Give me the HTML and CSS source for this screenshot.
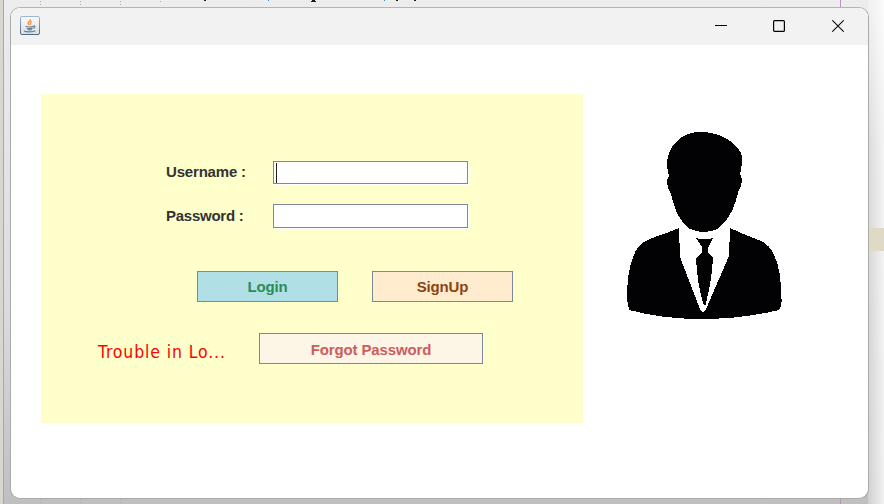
FILE: index.html
```html
<!DOCTYPE html>
<html lang="en">
<head>
<meta charset="utf-8">
<title>Login</title>
<link rel="stylesheet" href="styles.css">
</head>
<body>
<svg class="editor" width="884" height="504" aria-hidden="true">
  <defs>
    <linearGradient id="shade"><stop stop-color="#d0d0d0"/><stop offset="1" stop-color="#f2f2f2"/></linearGradient>
    <linearGradient id="fade" x2="0" y2="1"><stop stop-color="#fff" stop-opacity=".7"/><stop offset=".3" stop-color="#fff" stop-opacity=".2"/><stop offset="1" stop-color="#fff" stop-opacity="0"/></linearGradient>
  </defs>
  <rect x="868" width="16" height="504" fill="url(#shade)"/>
  <rect x="868" width="16" height="504" fill="url(#fade)"/>
  <rect width="3" height="504" fill="#d9d7cd"/>
  <rect x="3" width="1" height="504" fill="#aaa9a5"/>
  <rect x="868" y="228" width="16" height="23" fill="#dfdac5"/>
  <path d="M40.5 1V504M80.5 1V504M120.5 1V504" stroke="#aaa" stroke-dasharray="1 2"/>
  <path d="M160.5 1v1" stroke="#aaa"/>
  <path d="M840.5 0V504" stroke="#bd91bd"/>
  <path d="M204 .5h2M312 .5h3M396 .5h2M414 .5h2M311 1.5h5" stroke="#28190f"/>
  <path d="M268 .5h1M384 .5h1" stroke="#398bc0"/>
</svg>
<div class="window">
  <header class="titlebar">
    <svg class="java" width="20" height="19" viewBox="0 0 20 19">
      <defs>
        <linearGradient id="edge" x2="0" y2="1"><stop stop-color="#9db7d1"/><stop offset="1" stop-color="#496b83"/></linearGradient>
        <linearGradient id="face" x2="0" y2="1"><stop stop-color="#fafafa"/><stop offset="1" stop-color="#dedede"/></linearGradient>
      </defs>
      <rect x=".5" y=".5" width="19" height="18" rx="1.5" fill="url(#face)" stroke="url(#edge)"/>
      <path d="M10.5 3.3c.8 1.8-3.3 2.6-2.3 4.3.3.5.9.8 1.2 1.3M11.8 5.5c-2.4 1.3-1.1 2-1.3 3.3" fill="none" stroke="#ef9145" stroke-width="1.4"/>
      <path d="M5.5 10.3c2 .8 5.5.8 8 0M6.7 12.2c2 .6 3.8.6 6 0M7.5 13.5c1.5.5 3 .5 4.5 0M13.5 10c2-.5 1.6 1.7-.3 2.2M4 15c2 1.2 9 1.2 11.5-.2" fill="none" stroke="#648199" stroke-width="1.2"/>
    </svg>
    <div class="controls">
      <svg width="12" height="14" viewBox="0 0 12 14"><path d="M0 6.5h12" stroke="#000"/></svg>
      <svg width="12" height="14" viewBox="0 0 12 14"><rect x=".6" y="1.6" width="10.8" height="10.8" rx="1" fill="none" stroke="#000" stroke-width="1.2"/></svg>
      <svg width="12" height="14" viewBox="0 0 12 14"><path d="M.3 1.3 11.7 12.7M11.7 1.3.3 12.7" stroke="#000" stroke-width="1.2"/></svg>
    </div>
  </header>
  <main class="content">
    <form class="panel">
      <div class="field"><label for="user">Username :</label><div class="entry"><input id="user" type="text"><span class="caret"></span></div></div>
      <div class="field second"><label for="pass">Password :</label><div class="entry tall"><input id="pass" type="password"></div></div>
      <div class="actions">
        <button type="button" class="login">Login</button>
        <button type="button" class="signup">SignUp</button>
      </div>
      <div class="help">
        <span class="trouble">Trouble in Lo...</span>
        <button type="button" class="forgot">Forgot Password</button>
      </div>
    </form>
    <svg class="avatar" width="190" height="210" viewBox="610 120 190 210" shape-rendering="crispEdges">
      <path fill="#020103" d="M699 131c-8 0-16 3-22 9-6 5-10 14-10 23 0 5 1 8 2 12-3 3-2 11 1 16 2 3 2 8 4 13 3 11 9 19 16 24 9 4 19 4 27 0 8-6 15-15 18-26 2-5 2-8 4-13 3-6 4-10 1-16 2-6 2-13 2-18-1-5-5-9-9-13-8-6-15-9-22-10-4-1-8-1-12-1Z"/>
      <path fill="#020103" d="M679 227c-11 5-23 8-31 12-8 3-12 9-15 17-4 11-6 23-6 42l2 11c23 6 46 9 72 9 28 0 53-3 78-9 3-4 3-9 2-16 0-16-2-29-7-39-3-7-7-11-13-14-10-4-21-8-31-13l-1 28-23 53q-3 6-6 0l-20-52Z"/>
      <path fill="#020103" d="M696 237q8 3 17 0l-5 10q-1 3 0 5l5 5q-1 21-7 45-1 5-3 0-6-21-7-45l6-6q1-3 0-5Z"/>
    </svg>
  </main>
</div>
</body>
</html>
```
FILE: styles.css
```css
* { box-sizing: border-box; }
body {
  width: 884px;
  height: 504px;
  margin: 0;
  padding: 7px 0 0 10px;
  overflow: hidden;
  background: linear-gradient(#ededed, #dcdcdc 60%, #bfbfbf);
  font-family: "Liberation Sans", Arial, sans-serif;
}
.editor {
  position: absolute;
  inset: 0;
}
.window {
  position: relative;
  width: 859px;
  height: 492px;
  border: 1px solid #aaa;
  border-top-color: #b4b4b4;
  border-radius: 10px;
  overflow: hidden;
  background: #fff;
}
.titlebar {
  display: flex;
  justify-content: space-between;
  height: 37px;
  padding: 8px 24px 0 9px;
  background: #f2f2f2;
}
.controls {
  display: flex;
  gap: 46px;
  padding-top: 3px;
}
.controls svg { margin-right: 0.5px; }
.content {
  display: flex;
  padding: 49px 0 0 30px;
}
.panel {
  width: 542px;
  height: 329px;
  padding-top: 67px;
  background: #ffffcc;
}
.field {
  display: flex;
  padding-left: 125px;
  font-size: 15px;
  font-weight: bold;
  color: #333;
}
.field label {
  width: 107px;
  line-height: 21px;
  letter-spacing: -0.18px;
}
.second { margin-top: 20px; }
.second label { line-height: 23px; letter-spacing: -0.25px; }
.entry {
  position: relative;
  width: 195px;
  height: 23px;
  box-shadow: 1px 1px #fff;
}
.tall { height: 24px; }
.entry input {
  display: block;
  width: 100%;
  height: 100%;
  padding: 0 3px;
  border: 1px solid #7a8a99;
  border-radius: 0;
  outline: 0;
  background: #fff;
}
.caret {
  position: absolute;
  left: 3px;
  top: 2px;
  width: 1px;
  height: 20px;
  background: #222;
}
.actions {
  display: flex;
  gap: 34px;
  margin: 43px 0 0 156px;
}
button {
  height: 31px;
  padding: 0 0 1px;
  border: 1px solid #7a8a99;
  border-radius: 0;
  font: bold 15px "Liberation Sans", Arial, sans-serif;
  letter-spacing: -0.13px;
}
.login, .signup { width: 141px; }
.login { background: #b0e0e6; color: #2e8b57; }
.signup { background: #ffebcd; color: #8b4513; }
.help {
  display: flex;
  margin: 31px 0 0 57px;
}
.trouble {
  width: 161px;
  padding-top: 4px;
  color: #f00;
  font: 17.5px/31px "DejaVu Sans Condensed", "DejaVu Sans", sans-serif;
  letter-spacing: 0.87px;
  white-space: nowrap;
}
.forgot {
  width: 224px;
  padding: 1px 0 0;
  background: #fdf5e6;
  color: #cd5c5c;
}
.avatar { margin: 27px 0 0 27px; }
```
